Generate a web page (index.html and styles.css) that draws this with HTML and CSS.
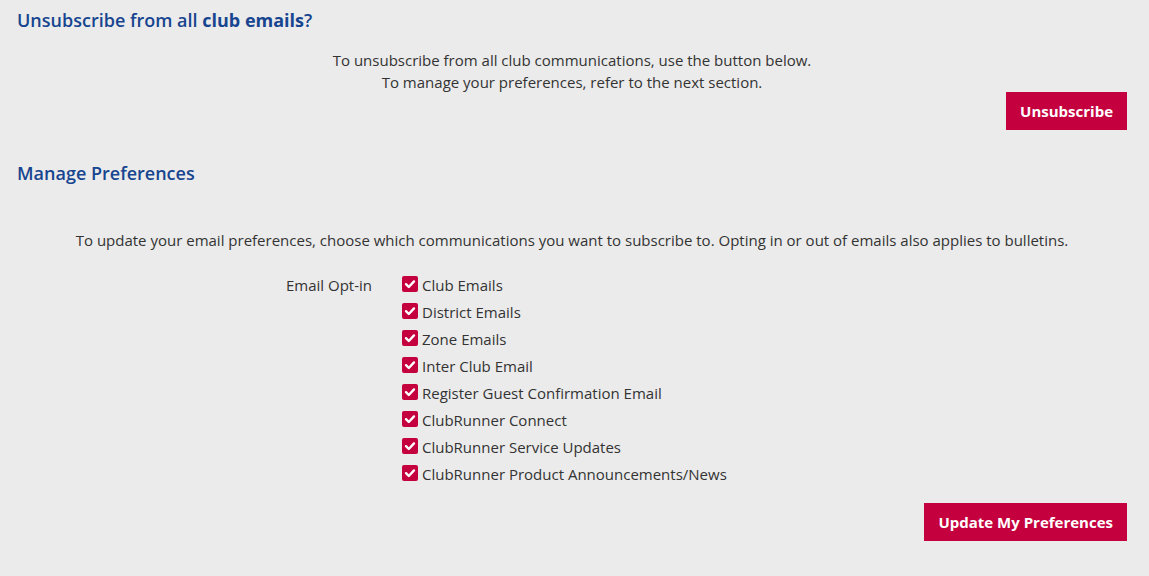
FILE: index.html
```html
<!DOCTYPE html>
<html>
<head>
<meta charset="utf-8">
<link rel="stylesheet" href="styles.css">
</head>
<body>
<div class="page">
  <h2 class="title title-first"><span class="semi">Unsubscribe from all</span> <b>club emails</b><span class="semi">?</span></h2>
  <p class="intro">To unsubscribe from all club communications, use the button below.<br>To manage your preferences, refer to the next section.</p>
  <div class="actions actions-first"><button class="btn">Unsubscribe</button></div>

  <h2 class="title title-second">Manage Preferences</h2>
  <p class="note">To update your email preferences, choose which communications you want to subscribe to. Opting in or out of emails also applies to bulletins.</p>

  <div class="form-row">
    <div class="label">Email Opt-in</div>
    <ul class="checks">
      <li><span class="box"><svg viewBox="0 0 16 16" width="16" height="16"><path d="M4 8.2 L6.8 11 L12 5.4" fill="none" stroke="#fff" stroke-width="2.4" stroke-linecap="round" stroke-linejoin="round"/></svg></span>Club Emails</li>
      <li><span class="box"><svg viewBox="0 0 16 16" width="16" height="16"><path d="M4 8.2 L6.8 11 L12 5.4" fill="none" stroke="#fff" stroke-width="2.4" stroke-linecap="round" stroke-linejoin="round"/></svg></span>District Emails</li>
      <li><span class="box"><svg viewBox="0 0 16 16" width="16" height="16"><path d="M4 8.2 L6.8 11 L12 5.4" fill="none" stroke="#fff" stroke-width="2.4" stroke-linecap="round" stroke-linejoin="round"/></svg></span>Zone Emails</li>
      <li><span class="box"><svg viewBox="0 0 16 16" width="16" height="16"><path d="M4 8.2 L6.8 11 L12 5.4" fill="none" stroke="#fff" stroke-width="2.4" stroke-linecap="round" stroke-linejoin="round"/></svg></span>Inter Club Email</li>
      <li><span class="box"><svg viewBox="0 0 16 16" width="16" height="16"><path d="M4 8.2 L6.8 11 L12 5.4" fill="none" stroke="#fff" stroke-width="2.4" stroke-linecap="round" stroke-linejoin="round"/></svg></span>Register Guest Confirmation Email</li>
      <li><span class="box"><svg viewBox="0 0 16 16" width="16" height="16"><path d="M4 8.2 L6.8 11 L12 5.4" fill="none" stroke="#fff" stroke-width="2.4" stroke-linecap="round" stroke-linejoin="round"/></svg></span>ClubRunner Connect</li>
      <li><span class="box"><svg viewBox="0 0 16 16" width="16" height="16"><path d="M4 8.2 L6.8 11 L12 5.4" fill="none" stroke="#fff" stroke-width="2.4" stroke-linecap="round" stroke-linejoin="round"/></svg></span>ClubRunner Service Updates</li>
      <li><span class="box"><svg viewBox="0 0 16 16" width="16" height="16"><path d="M4 8.2 L6.8 11 L12 5.4" fill="none" stroke="#fff" stroke-width="2.4" stroke-linecap="round" stroke-linejoin="round"/></svg></span>ClubRunner Product Announcements/News</li>
    </ul>
  </div>
  <div class="actions actions-last"><button class="btn">Update My Preferences</button></div>
</div>
</body>
</html>
```
FILE: styles.css
```css
html, body {
  margin: 0;
  padding: 0;
  background: #ebebeb;
}
body {
  font-family: "Open Sans", "Noto Sans", sans-serif;
  font-size: 15px;
  color: #333;
}
.page {
  padding: 0 22px 0 17px;
}
.title {
  margin: 0;
  font-size: 18px;
  line-height: 22px;
  font-weight: 600;
  color: #17458f;
}
.title b { font-weight: 700; }
.title-first { padding-top: 9px; }
.title-second { margin-top: 32px; }
.intro {
  margin: 18px 0 0;
  line-height: 22px;
  text-align: center;
}
.note {
  margin: 45px 0 0;
  line-height: 22px;
  text-align: center;
}
.actions {
  display: flex;
  justify-content: flex-end;
}
.actions-first { margin-top: -1px; }
.actions-last { margin-top: 16px; }
.btn {
  font-family: inherit;
  font-size: 15px;
  font-weight: 700;
  line-height: 22px;
  color: #fff;
  background: #c5003e;
  border: 0;
  padding: 8px 14px;
  border-radius: 0;
}
.form-row {
  display: grid;
  grid-template-columns: 370px 1fr;
  margin-top: 20px;
}
.label {
  text-align: right;
  padding-right: 15px;
  padding-top: 1px;
  line-height: 27px;
}
.checks {
  list-style: none;
  margin: 0;
  padding: 0 0 0 15px;
}
.checks li {
  display: flex;
  align-items: center;
  height: 27px;
  gap: 4px;
}
.box {
  width: 16px;
  height: 16px;
  background: #c5003e;
  border-radius: 2px;
  display: flex;
  margin-top: -2px;
}
```
